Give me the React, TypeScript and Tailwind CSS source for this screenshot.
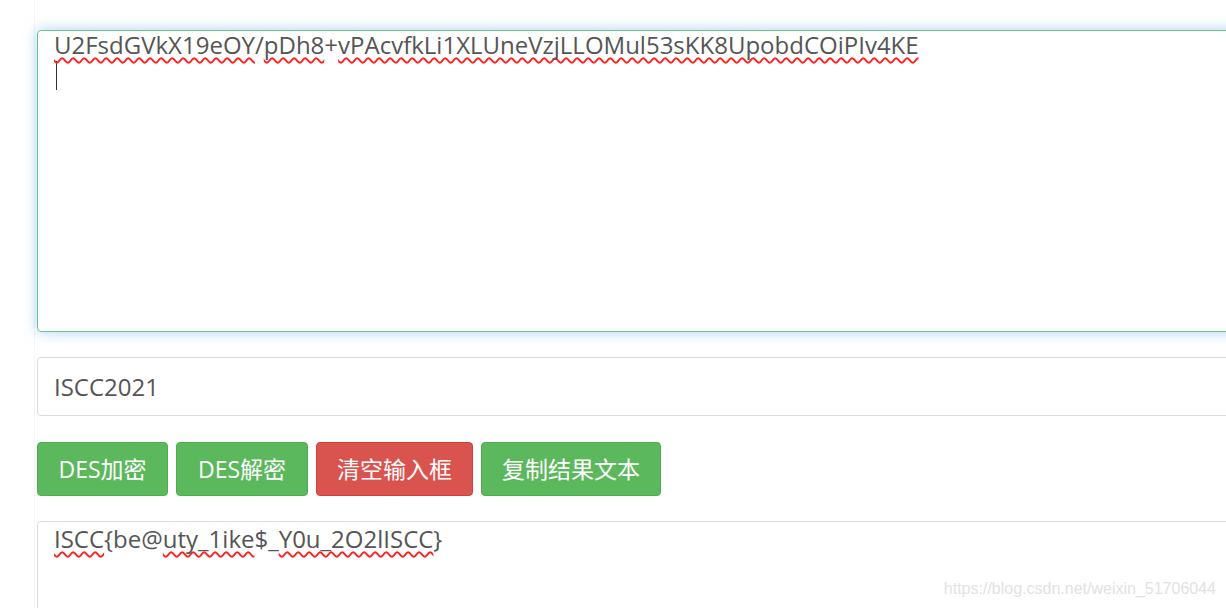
import React from 'react';

const FONT = "font-['Open_Sans','Noto_Sans_CJK_SC',sans-serif]";
const squiggle =
  'underline decoration-wavy decoration-[#ff1f1f] decoration-[1.5px] underline-offset-[3px] [text-decoration-skip-ink:none]';

const App: React.FC = () => {
  return (
    <div className={`relative h-[608px] w-full overflow-hidden bg-white ${FONT} text-[#555]`}>
      <div className="ml-[34px] flex h-full flex-col border-l border-[#f6f6f6] pl-[2px] pt-[30px]">
        {/* encrypted text area, focused */}
        <div className="h-[302px] w-[1260px] shrink-0 rounded-[4px] border border-[#6cc48a] px-[16px] pt-[1px] text-[24px] leading-[26px] shadow-[0_0_14px_rgba(102,175,233,0.55)]">
          <div className="whitespace-nowrap">
            <span className={squiggle}>U2FsdGVkX19eOY</span>/<span className={squiggle}>pDh8</span>+
            <span className={squiggle}>vPAcvfkLi1XLUneVzjLLOMul53sKK8UpobdCOiPIv4KE</span>
          </div>
          <div className="pt-[3px]">
            <span className="ml-[2px] block h-[29px] w-px bg-[#333]" />
          </div>
        </div>

        {/* key */}
        <div className="mt-[25px] flex h-[59px] w-[1260px] shrink-0 items-center rounded-[4px] border border-[#dcdcdc] px-[16px] text-[24px]">
          ISCC2021
        </div>

        {/* actions */}
        <div className="mt-[26px] flex shrink-0 gap-[8px] text-[23px] text-white">
          <button className="flex h-[54px] w-[131px] items-center justify-center rounded-[4px] border border-[#4cae4c] bg-[#5cb85c]">DES加密</button>
          <button className="flex h-[54px] w-[132px] items-center justify-center rounded-[4px] border border-[#4cae4c] bg-[#5cb85c]">DES解密</button>
          <button className="flex h-[54px] w-[157px] items-center justify-center rounded-[4px] border border-[#d43f3a] bg-[#d9534f]">清空输入框</button>
          <button className="flex h-[54px] w-[180px] items-center justify-center rounded-[4px] border border-[#4cae4c] bg-[#5cb85c]">复制结果文本</button>
        </div>

        {/* result */}
        <div className="mt-[25px] h-[200px] w-[1260px] shrink-0 rounded-[4px] border border-[#dcdcdc] px-[16px] pt-[4px] text-[24px] leading-[26px]">
          <span className={squiggle}>ISCC</span>{'{be@'}
          <span className={squiggle}>uty_1ike</span>$_
          <span className={squiggle}>Y0u_2O2lISCC</span>{'}'}
        </div>
      </div>

      <div className="absolute bottom-[7px] right-[10px] font-['Liberation_Sans',Arial,sans-serif] text-[16px] text-[#e2e2e2]">
        https://blog.csdn.net/weixin_51706044
      </div>
    </div>
  );
};

export default App;
